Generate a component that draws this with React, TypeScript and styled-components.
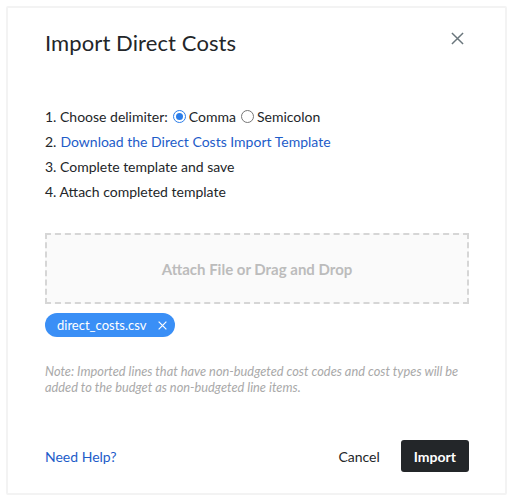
import React, { useState } from 'react';
import styled, { createGlobalStyle } from 'styled-components';

const GlobalStyle = createGlobalStyle`
  html, body {
    margin: 0;
    padding: 0;
    background: #ffffff;
    font-family: Lato, "Open Sans", sans-serif;
    color: #232629;
  }
`;

const Page = styled.div`
  padding: 6px;
  width: 513px;
  height: 501px;
  box-sizing: border-box;
`;

const Modal = styled.div`
  box-sizing: border-box;
  height: 489px;
  border: 2px solid #f3f3f3;
  border-radius: 2px;
  background: #fff;
  padding: 16px 36px 0 37px;
  display: flex;
  flex-direction: column;
`;

const Header = styled.div`
  display: flex;
  justify-content: space-between;
  align-items: flex-start;
  height: 80px;
`;

const Title = styled.h1`
  margin: 0;
  padding-top: 5px;
  font-size: 22px;
  font-weight: 400;
  color: #232629;
  letter-spacing: 0.1px;
`;

const CloseButton = styled.button`
  border: none;
  background: none;
  padding: 0;
  margin: 8px 4px 0 0;
  width: 14px;
  height: 14px;
  display: flex;
  cursor: pointer;
`;

const Steps = styled.ol`
  list-style: none;
  margin: 0;
  padding: 0;
  font-size: 14px;
`;

const Step = styled.li`
  height: 25px;
  display: flex;
  align-items: center;
  gap: 4px;
`;

const Link = styled.a`
  color: #1d5cc9;
  text-decoration: none;
  font-size: 14px;
  cursor: pointer;
`;

const RadioLabel = styled.label`
  display: inline-flex;
  align-items: center;
  gap: 3px;
  margin-left: 1px;
`;

const RadioCircle = styled.span<{ $checked: boolean }>`
  width: 13px;
  height: 13px;
  box-sizing: border-box;
  border-radius: 50%;
  border: 1px solid ${({ $checked }) => ($checked ? '#2b7de9' : '#767676')};
  display: inline-flex;
  align-items: center;
  justify-content: center;
  background: #fff;

  &::after {
    content: '';
    width: 7px;
    height: 7px;
    border-radius: 50%;
    background: ${({ $checked }) => ($checked ? '#2b7de9' : 'transparent')};
  }
`;

const Dropzone = styled.div`
  margin-top: 29px;
  height: 71px;
  box-sizing: border-box;
  border: 2px dashed #d6d6d6;
  background: #fafafa;
  display: flex;
  align-items: center;
  justify-content: center;
  font-size: 15px;
  font-weight: 700;
  color: #bcbcbc;
`;

const Chip = styled.span`
  align-self: flex-start;
  margin-top: 9px;
  height: 24px;
  padding: 0 8px 0 12px;
  border-radius: 12px;
  background: #3a8ff6;
  color: #fff;
  font-size: 13px;
  display: inline-flex;
  align-items: center;
  gap: 12px;
`;

const ChipClose = styled.span`
  display: inline-flex;
`;

const Note = styled.p`
  margin: 26px 0 0;
  font-size: 12.8px;
  font-style: italic;
  line-height: 16px;
  color: #a9a9a9;
`;

const Footer = styled.div`
  margin-top: auto;
  height: 72px;
  display: flex;
  align-items: center;
  justify-content: space-between;
  padding-bottom: 1px;
`;

const Actions = styled.div`
  display: flex;
  align-items: center;
  gap: 21px;
`;

const Button = styled.button<{ $primary?: boolean }>`
  font-family: Lato, "Open Sans", sans-serif;
  font-size: 14px;
  font-weight: ${({ $primary }) => ($primary ? 700 : 400)};
  border: none;
  border-radius: 3px;
  height: 32px;
  padding: 0 ${({ $primary }) => ($primary ? 13 : 0)}px;
  cursor: pointer;
  background: ${({ $primary }) => ($primary ? '#232629' : 'transparent')};
  color: ${({ $primary }) => ($primary ? '#fff' : '#232629')};
`;

const Cross = ({ size, color, width }: { size: number; color: string; width: number }) => (
  <svg width={size} height={size} viewBox="0 0 14 14" fill="none">
    <path d="M1 1L13 13M13 1L1 13" stroke={color} strokeWidth={width} />
  </svg>
);

export default function App() {
  const [delimiter, setDelimiter] = useState<'comma' | 'semicolon'>('comma');

  return (
    <Page>
      <GlobalStyle />
      <Modal>
        <Header>
          <Title>Import Direct Costs</Title>
          <CloseButton aria-label="Close">
            <Cross size={13} color="#6a767c" width={1.6} />
          </CloseButton>
        </Header>
        <Steps>
          <Step>
            1. Choose delimiter:
            <RadioLabel onClick={() => setDelimiter('comma')}>
              <RadioCircle $checked={delimiter === 'comma'} />
              Comma
            </RadioLabel>
            <RadioLabel onClick={() => setDelimiter('semicolon')}>
              <RadioCircle $checked={delimiter === 'semicolon'} />
              Semicolon
            </RadioLabel>
          </Step>
          <Step>
            2. <Link>Download the Direct Costs Import Template</Link>
          </Step>
          <Step>3. Complete template and save</Step>
          <Step>4. Attach completed template</Step>
        </Steps>
        <Dropzone>Attach File or Drag and Drop</Dropzone>
        <Chip>
          direct_costs.csv
          <ChipClose>
            <Cross size={9} color="#fff" width={1.8} />
          </ChipClose>
        </Chip>
        <Note>
          Note: Imported lines that have non-budgeted cost codes and cost types will be added to the
          budget as non-budgeted line items.
        </Note>
        <Footer>
          <Link>Need Help?</Link>
          <Actions>
            <Button>Cancel</Button>
            <Button $primary>Import</Button>
          </Actions>
        </Footer>
      </Modal>
    </Page>
  );
}
